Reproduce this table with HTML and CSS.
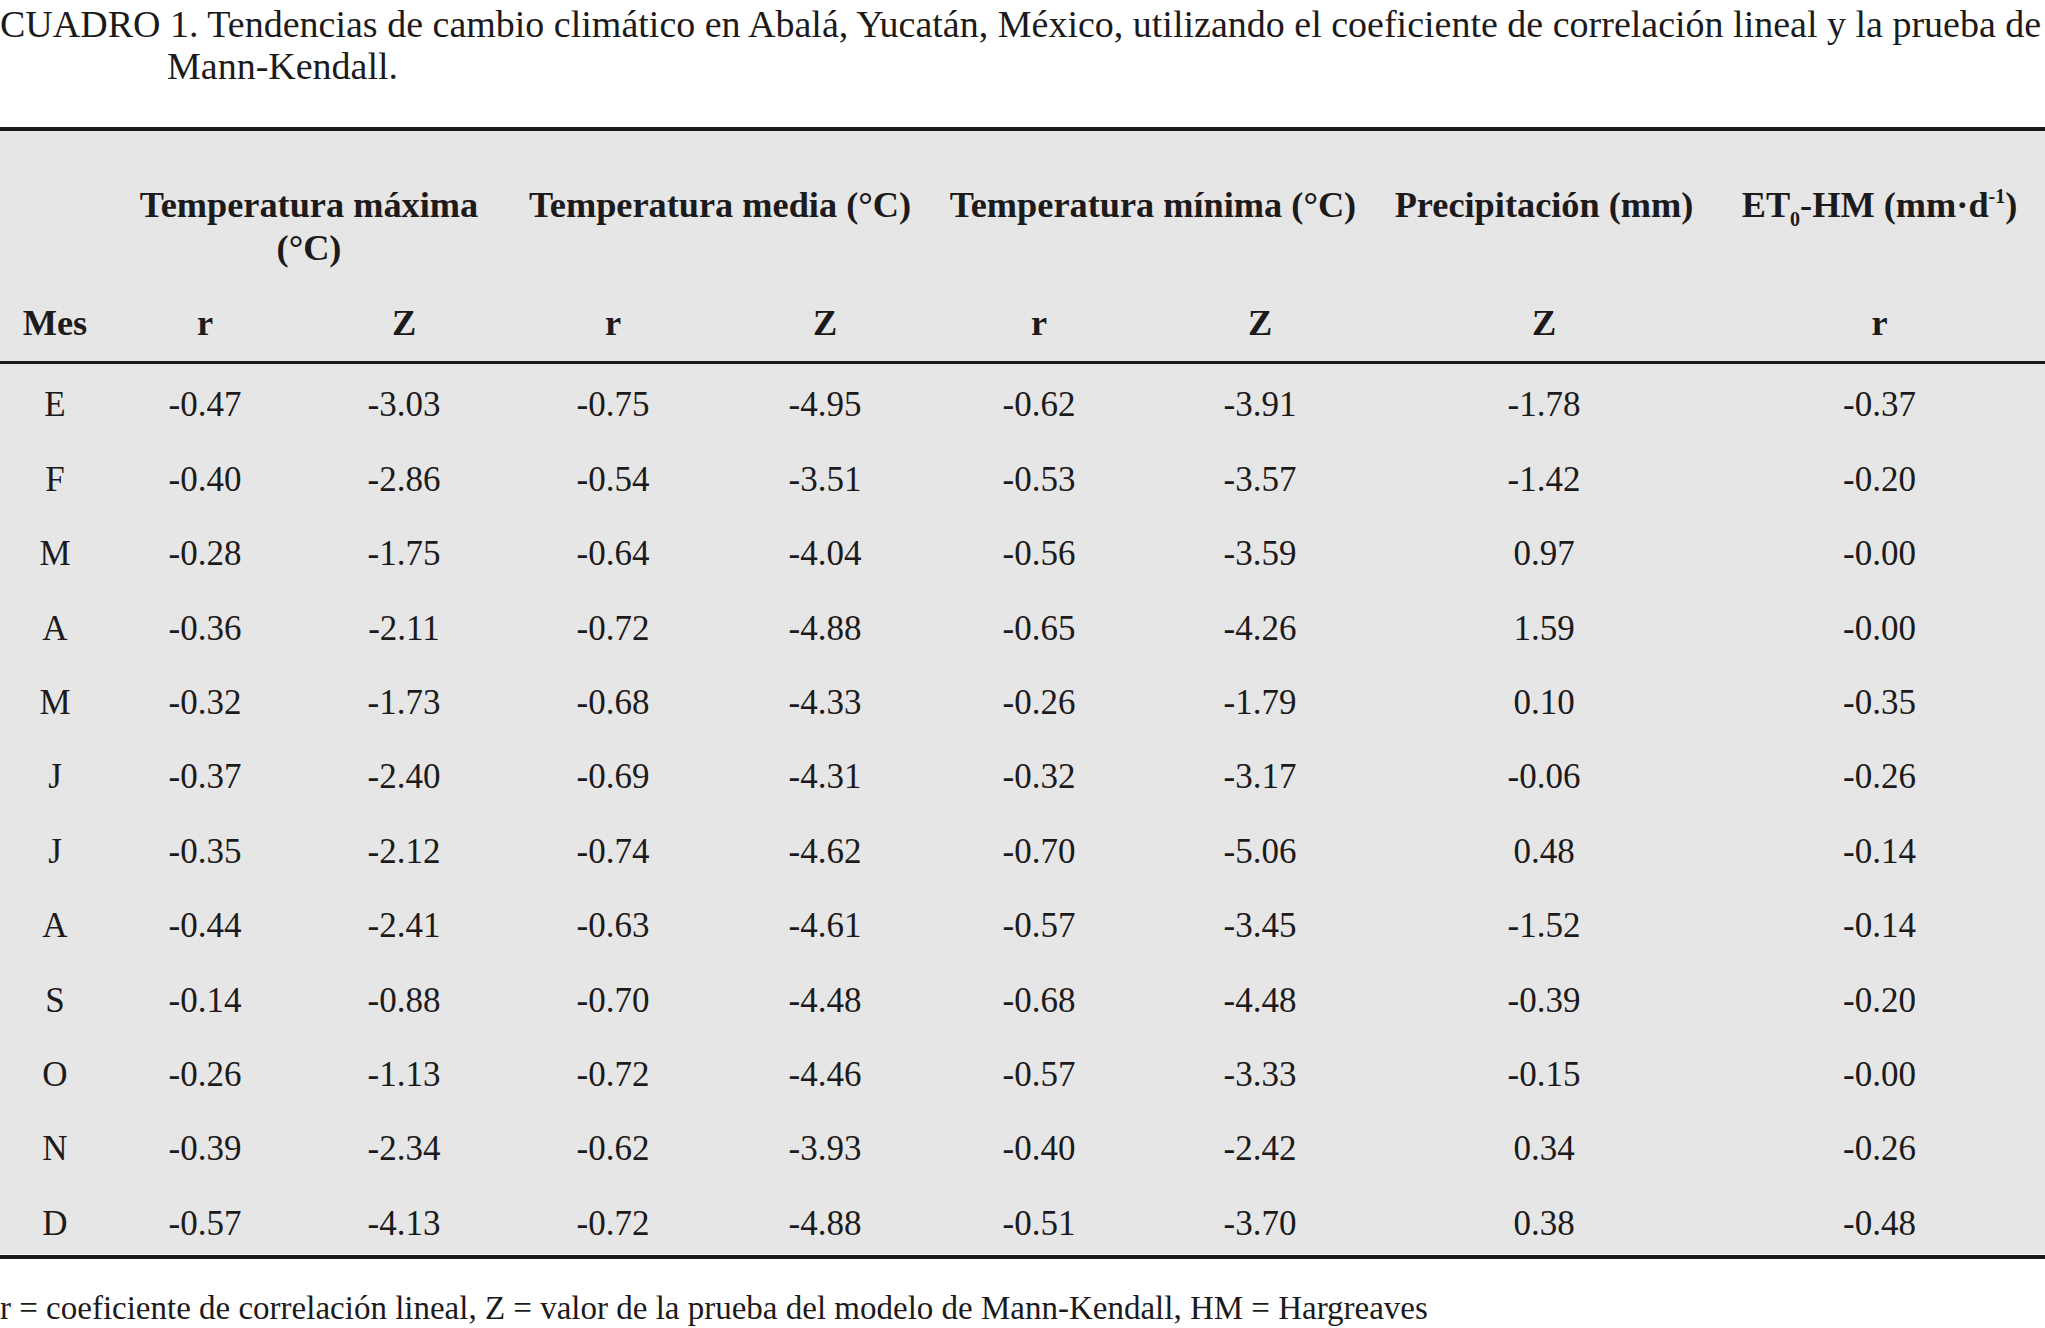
FILE: index.html
```html
<!DOCTYPE html>
<html lang="es">
<head>
<meta charset="utf-8">
<title>Cuadro 1</title>
<link rel="stylesheet" href="styles.css">
</head>
<body>
<p class="caption">CUADRO 1. Tendencias de cambio climático en Abalá, Yucatán, México, utilizando el coeficiente de correlación lineal y la prueba de<br>Mann-Kendall.</p>
<table class="data">
  <colgroup>
    <col class="c-mes"><col class="c-r1"><col class="c-z1"><col class="c-r2"><col class="c-z2"><col class="c-r3"><col class="c-z3"><col class="c-z4"><col class="c-r5">
  </colgroup>
  <thead>
    <tr class="groups">
      <th></th>
      <th colspan="2">Temperatura máxima<br>(°C)</th>
      <th colspan="2">Temperatura media (°C)</th>
      <th colspan="2">Temperatura mínima (°C)</th>
      <th>Precipitación (mm)</th>
      <th>ET<sub>0</sub>-HM (mm·d<sup>-1</sup>)</th>
    </tr>
    <tr class="vars">
      <th>Mes</th><th>r</th><th>Z</th><th>r</th><th>Z</th><th>r</th><th>Z</th><th>Z</th><th>r</th>
    </tr>
  </thead>
  <tbody>
    <tr><td>E</td><td>-0.47</td><td>-3.03</td><td>-0.75</td><td>-4.95</td><td>-0.62</td><td>-3.91</td><td>-1.78</td><td>-0.37</td></tr>
    <tr><td>F</td><td>-0.40</td><td>-2.86</td><td>-0.54</td><td>-3.51</td><td>-0.53</td><td>-3.57</td><td>-1.42</td><td>-0.20</td></tr>
    <tr><td>M</td><td>-0.28</td><td>-1.75</td><td>-0.64</td><td>-4.04</td><td>-0.56</td><td>-3.59</td><td>0.97</td><td>-0.00</td></tr>
    <tr><td>A</td><td>-0.36</td><td>-2.11</td><td>-0.72</td><td>-4.88</td><td>-0.65</td><td>-4.26</td><td>1.59</td><td>-0.00</td></tr>
    <tr><td>M</td><td>-0.32</td><td>-1.73</td><td>-0.68</td><td>-4.33</td><td>-0.26</td><td>-1.79</td><td>0.10</td><td>-0.35</td></tr>
    <tr><td>J</td><td>-0.37</td><td>-2.40</td><td>-0.69</td><td>-4.31</td><td>-0.32</td><td>-3.17</td><td>-0.06</td><td>-0.26</td></tr>
    <tr><td>J</td><td>-0.35</td><td>-2.12</td><td>-0.74</td><td>-4.62</td><td>-0.70</td><td>-5.06</td><td>0.48</td><td>-0.14</td></tr>
    <tr><td>A</td><td>-0.44</td><td>-2.41</td><td>-0.63</td><td>-4.61</td><td>-0.57</td><td>-3.45</td><td>-1.52</td><td>-0.14</td></tr>
    <tr><td>S</td><td>-0.14</td><td>-0.88</td><td>-0.70</td><td>-4.48</td><td>-0.68</td><td>-4.48</td><td>-0.39</td><td>-0.20</td></tr>
    <tr><td>O</td><td>-0.26</td><td>-1.13</td><td>-0.72</td><td>-4.46</td><td>-0.57</td><td>-3.33</td><td>-0.15</td><td>-0.00</td></tr>
    <tr><td>N</td><td>-0.39</td><td>-2.34</td><td>-0.62</td><td>-3.93</td><td>-0.40</td><td>-2.42</td><td>0.34</td><td>-0.26</td></tr>
    <tr><td>D</td><td>-0.57</td><td>-4.13</td><td>-0.72</td><td>-4.88</td><td>-0.51</td><td>-3.70</td><td>0.38</td><td>-0.48</td></tr>
  </tbody>
</table>
<div class="bottom-rule"></div>
<p class="note">r = coeficiente de correlación lineal, Z = valor de la prueba del modelo de Mann-Kendall, HM = Hargreaves</p>
</body>
</html>
```

FILE: styles.css
```css
html, body {
  margin: 0;
  padding: 0;
  background: #ffffff;
}

body {
  font-family: "Liberation Serif", "Times New Roman", serif;
  color: #1c1a1b;
  width: 2045px;
}

.caption {
  margin: 0 0 40px 0;
  padding-top: 3px;
  font-size: 38px;
  line-height: 42px;
  padding-left: 167px;
  text-indent: -167px;
  white-space: nowrap;
}

.data {
  width: 2045px;
  table-layout: fixed;
  border-collapse: collapse;
  border-spacing: 0;
  background: #e6e6e6;
  border-top: 4px solid #1c1a1b;
}

.c-mes { width: 110px; }
.c-r1 { width: 190px; }
.c-z1 { width: 208px; }
.c-r2 { width: 210px; }
.c-z2 { width: 214px; }
.c-r3 { width: 214px; }
.c-z3 { width: 228px; }
.c-z4 { width: 340px; }
.c-r5 { width: 331px; }

.data th {
  font-weight: bold;
  font-size: 36.3px;
  line-height: 43px;
  text-align: center;
  vertical-align: top;
  padding: 0;
  white-space: nowrap;
}

.groups th {
  padding-top: 53px;
  height: 86px;
}

.vars th {
  padding-top: 32px;
  padding-bottom: 16px;
  border-bottom: 3px solid #1c1a1b;
}

.data sub {
  font-size: 20px;
  line-height: 0;
  vertical-align: -9px;
}

.data sup {
  font-size: 20px;
  line-height: 0;
  vertical-align: 14px;
}

.data td {
  font-size: 35px;
  line-height: 66px;
  padding: 8.4px 0 0 0;
  height: 65.8px;
  text-align: center;
  vertical-align: top;
}

.data tbody tr:last-child td {
  line-height: 60px;
  padding-top: 11.4px;
  height: 60px;
}

.bottom-rule {
  height: 4px;
  margin-top: 1px;
  background: #1c1a1b;
}

.note {
  margin: 31px 0 0 0;
  font-size: 33px;
  line-height: 36px;
  white-space: nowrap;
}
```
